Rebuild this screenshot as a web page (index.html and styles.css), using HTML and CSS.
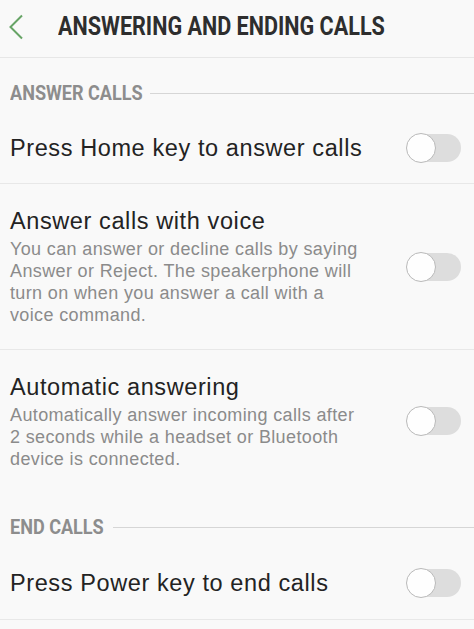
FILE: index.html
```
<!DOCTYPE html>
<html>
<head>
<meta charset="utf-8">
<link rel="stylesheet" href="styles.css">
</head>
<body>
<div class="screen">
  <header class="appbar">
    <svg class="back" width="16" height="26" viewBox="0 0 16 26"><path d="M14 1.5 L2.5 13 L14 24.5" fill="none" stroke="#67a466" stroke-width="2"/></svg>
    <h1 class="title">ANSWERING AND ENDING CALLS</h1>
  </header>

  <div class="section">
    <span class="section-label">ANSWER CALLS</span>
    <span class="section-line"></span>
  </div>

  <div class="row row-single">
    <div class="row-text"><div class="row-title">Press Home key to answer calls</div></div>
    <div class="toggle"><span class="thumb"></span></div>
  </div>

  <div class="row row-multi row-voice">
    <div class="row-text">
      <div class="row-title">Answer calls with voice</div>
      <div class="row-desc">You can answer or decline calls by saying Answer or Reject. The speakerphone will turn on when you answer a call with a voice command.</div>
    </div>
    <div class="toggle"><span class="thumb"></span></div>
  </div>

  <div class="row row-multi row-auto no-border">
    <div class="row-text">
      <div class="row-title">Automatic answering</div>
      <div class="row-desc">Automatically answer incoming calls after 2 seconds while a headset or Bluetooth device is connected.</div>
    </div>
    <div class="toggle"><span class="thumb"></span></div>
  </div>

  <div class="section">
    <span class="section-label section-label-end">END CALLS</span>
    <span class="section-line"></span>
  </div>

  <div class="row row-single row-power">
    <div class="row-text"><div class="row-title">Press Power key to end calls</div></div>
    <div class="toggle"><span class="thumb"></span></div>
  </div>
</div>
</body>
</html>
```

FILE: styles.css
```
html, body {
  margin: 0;
  padding: 0;
  background: #f9f9f9;
}
body {
  font-family: Roboto, "Noto Sans", sans-serif;
  width: 474px;
  height: 629px;
  overflow: hidden;
}
.screen {
  display: flex;
  flex-direction: column;
}
.appbar {
  height: 57px;
  border-bottom: 1px solid #e7e7e7;
  display: flex;
  align-items: center;
  box-sizing: content-box;
}
.back {
  margin-left: 8px;
  margin-top: -4px;
}
.title {
  margin: -6px 0 0 34px;
  font-size: 26px;
  font-weight: 700;
  color: #2e2e2e;
  white-space: nowrap;
  transform: scaleX(0.83);
  transform-origin: left center;
}
.section {
  height: 55px;
  display: flex;
  align-items: center;
  padding-left: 10px;
  padding-top: 15px;
  box-sizing: border-box;
}
.section-label {
  font-size: 21px;
  font-weight: 700;
  color: #8d8d8d;
  white-space: nowrap;
  display: inline-block;
  width: 130px;
  transform: scaleX(0.86);
  transform-origin: left center;
}
.section-label-end {
  width: 93px;
}
.section-line {
  flex: 1;
  height: 1px;
  background: #d6d6d6;
  margin-left: 10px;
}
.row {
  display: flex;
  align-items: center;
  padding: 0 13px 0 10px;
  border-bottom: 1px solid #e8e8e8;
  box-sizing: border-box;
}
.row.no-border {
  border-bottom: none;
}
.row-single {
  height: 71px;
}
.row-power {
  height: 73px;
}
.row-voice {
  height: 166px;
}
.row-auto {
  height: 142px;
}
.row-text {
  flex: 1;
  font-family: "Liberation Sans", Arial, sans-serif;
}
.row-title {
  font-size: 23.5px;
  color: #232323;
  line-height: 28px;
  letter-spacing: 0.6px;
}
.row-desc {
  font-size: 18px;
  line-height: 22px;
  color: #8b8b8b;
  margin-top: 3px;
  letter-spacing: 0.37px;
  max-width: 360px;
}
.toggle {
  width: 54px;
  height: 28px;
  border-radius: 14px;
  background: #dddddd;
  display: flex;
  align-items: center;
  flex: none;
}
.thumb {
  width: 28px;
  height: 28px;
  border-radius: 50%;
  background: #fefefe;
  border: 1.5px solid #b9b9b9;
  margin-left: -1px;
}
```
